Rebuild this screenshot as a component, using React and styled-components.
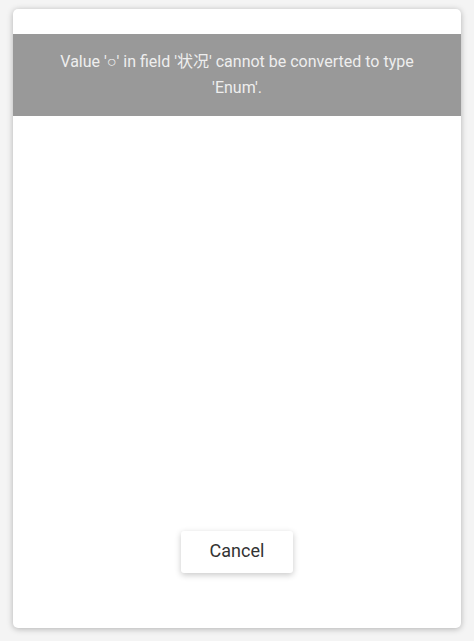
import React from "react";
import styled, { createGlobalStyle } from "styled-components";

const Global = createGlobalStyle`
  html, body { margin: 0; padding: 0; }
  body {
    background: #f4f4f4;
    font-family: Roboto, "Liberation Sans", "Noto Sans CJK SC", sans-serif;
    width: 474px;
    height: 641px;
    overflow: hidden;
  }
`;

const Page = styled.div`
  padding: 9px 13px 0 13px;
`;

const Card = styled.div`
  background: #fff;
  height: 619px;
  border-radius: 5px;
  box-shadow: 0 1px 6px rgba(0, 0, 0, 0.28);
  display: flex;
  flex-direction: column;
  align-items: center;
  padding-top: 25px;
  padding-bottom: 55px;
  box-sizing: border-box;
  overflow: hidden;
`;

const Banner = styled.div`
  align-self: stretch;
  background: #999999;
  color: #eeeeee;
  font-size: 16px;
  line-height: 26px;
  text-align: center;
  padding: 15px 34px;
`;

const Spacer = styled.div`
  flex: 1;
`;

const Button = styled.button`
  width: 112px;
  height: 42px;
  padding: 0 0 4px 0;
  border: none;
  background: #fff;
  border-radius: 3px;
  box-shadow: 0 2px 6px rgba(0, 0, 0, 0.22);
  font-family: Roboto, sans-serif;
  font-size: 18px;
  color: #333;
  cursor: pointer;
`;

export default function App() {
  return (
    <>
      <Global />
      <Page>
        <Card>
          <Banner>Value '○' in field '状况' cannot be converted to type 'Enum'.</Banner>
          <Spacer />
          <Button>Cancel</Button>
        </Card>
      </Page>
    </>
  );
}
